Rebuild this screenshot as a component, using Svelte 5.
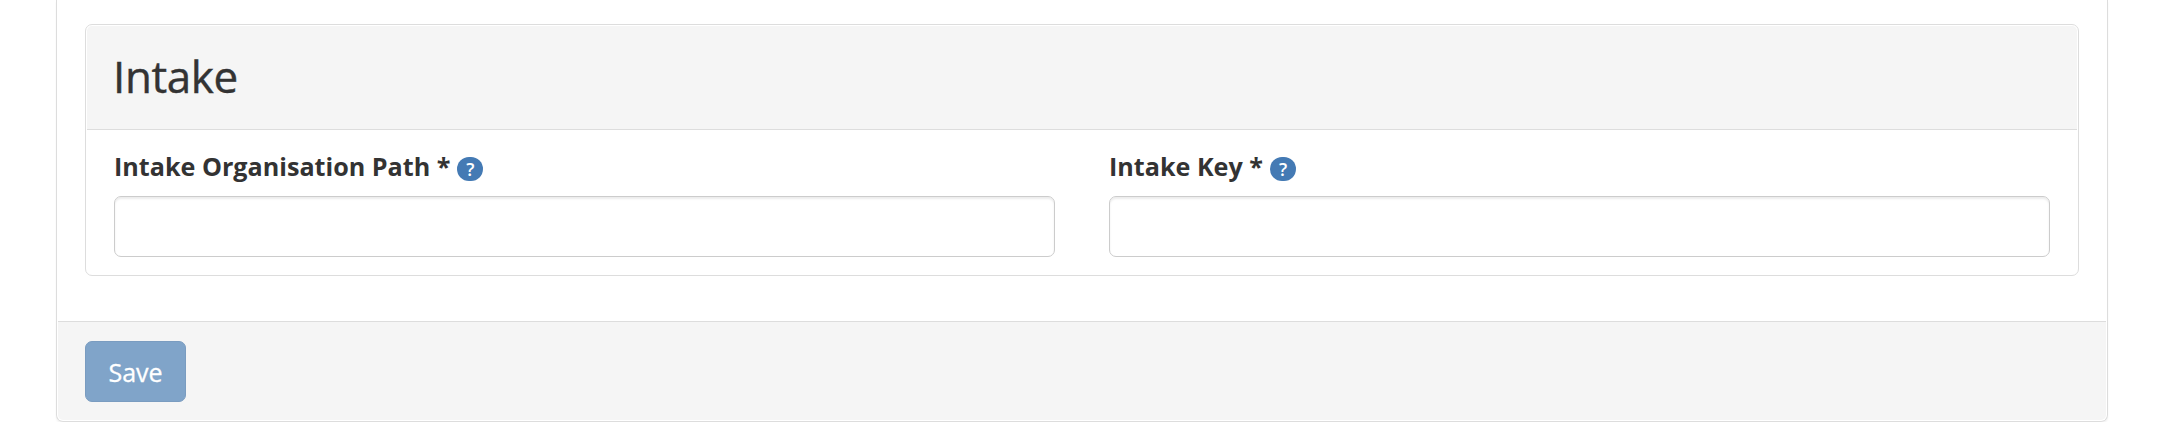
<script>
  const fields = [
    { id: 'organisation-path', label: 'Intake Organisation Path *' },
    { id: 'intake-key', label: 'Intake Key *' }
  ];
  let values = $state({ 'organisation-path': '', 'intake-key': '' });
</script>

<form class="outer">
  <div class="content">
    <section class="panel">
      <header><h2>Intake</h2></header>
      <div class="fields">
        {#each fields as field}
          <div class="field">
            <div class="caption">
              <label for={field.id}>{field.label}</label>
              <span class="help">?</span>
            </div>
            <input id={field.id} type="text" bind:value={values[field.id]} />
          </div>
        {/each}
      </div>
    </section>
  </div>
  <footer>
    <button type="button" disabled>Save</button>
  </footer>
</form>

<style>
  :global(body) {
    background: #fff;
    font-family: 'Open Sans', sans-serif;
    color: #333;
  }
  .outer,
  .outer * {
    box-sizing: border-box;
  }
  .outer {
    height: 422px;
    margin: 0 66px 0 56px;
    padding: 0 1px 1px;
    display: flex;
    flex-direction: column;
    border: 1px solid #ddd;
    border-top: 0;
    border-radius: 0 0 7px 7px;
    box-shadow: 0 2px 2px rgba(0, 0, 0, 0.05);
  }
  .content {
    flex: 1;
    padding: 24px 27px 0;
  }
  .panel {
    height: 252px;
    padding: 1px;
    border: 1px solid #ddd;
    border-radius: 7px;
  }
  header {
    height: 104px;
    padding: 0 27px 4px 26px;
    display: flex;
    align-items: center;
    background: #f5f5f5;
    border-bottom: 1px solid #ddd;
    border-radius: 5px 5px 0 0;
  }
  h2 {
    margin: 0;
    font-size: 44px;
    line-height: 48px;
    font-weight: 400;
    letter-spacing: -0.4px;
    -webkit-text-stroke: 0.4px #333;
  }
  .fields {
    display: grid;
    grid-template-columns: 1fr 1fr;
    gap: 54px;
    padding: 18px 27px 0;
  }
  .caption {
    height: 48px;
    display: flex;
    align-items: flex-start;
    gap: 7px;
  }
  label {
    font-size: 25.15px;
    line-height: 37px;
    font-weight: 700;
  }
  .help {
    width: 26px;
    height: 24px;
    margin-top: 9px;
    border-radius: 13px;
    background: #447ab4;
    color: #fff;
    font-size: 18px;
    font-weight: 600;
    line-height: 24px;
    text-align: center;
  }
  input {
    display: block;
    width: 100%;
    height: 61px;
    padding: 10px 24px;
    border: 1px solid #ccc;
    border-radius: 7px;
    outline: none;
    background: #fff;
    box-shadow: inset 0 2px 2px rgba(0, 0, 0, 0.075);
    font: 25px 'Open Sans', sans-serif;
    color: #555;
  }
  footer {
    height: 99px;
    padding: 19px 27px 0;
    background: #f5f5f5;
    border-top: 1px solid #ddd;
    border-radius: 0 0 5px 5px;
  }
  button {
    display: block;
    width: 101px;
    height: 61px;
    padding: 1px 0 0;
    border: 1px solid #7a9cc0;
    border-radius: 7px;
    background: #80a4c9;
    color: #fff;
    font: 25px/38px 'Open Sans', sans-serif;
    -webkit-text-stroke: 0.3px #fff;
  }
</style>
